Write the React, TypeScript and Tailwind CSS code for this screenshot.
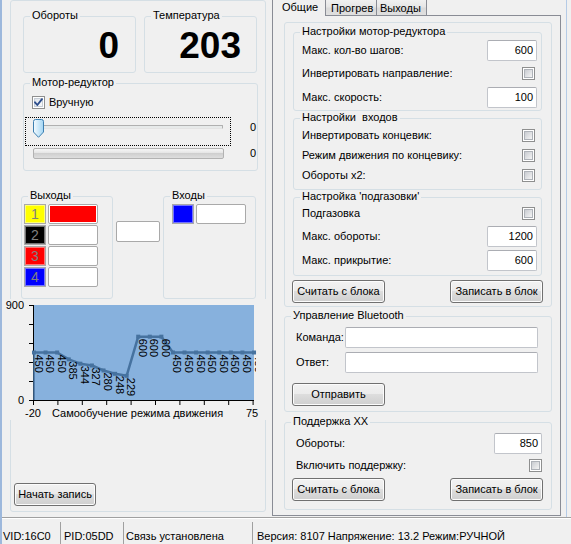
import React from "react";

type Kids = { className?: string; children?: React.ReactNode };

// Windows-style group box: light rounded frame with its caption sitting on the top edge
const Group = ({ title, className = "", children }: Kids & { title?: string }) => (
  <div className={`relative shrink-0 rounded-[3px] border border-[#d5dfe5] ${className}`}>
    {title && (
      <span className="absolute -top-[8px] left-[6px] whitespace-pre bg-[#f0f0f0] px-[2px] leading-[13px]">
        {title}
      </span>
    )}
    {children}
  </div>
);

const Btn = ({ label, className = "" }: { label: string; className?: string }) => (
  <button
    className={`flex shrink-0 items-center justify-center rounded-[3px] border border-[#707070] bg-[linear-gradient(to_bottom,#f2f2f2_0%,#ebebeb_49%,#dddddd_50%,#cfcfcf_100%)] text-[11px] leading-[13px] text-black shadow-[inset_0_0_0_1px_#fcfcfc] ${className}`}
  >
    {label}
  </button>
);

const Field = ({ value = "", className = "" }: { value?: string; className?: string }) => (
  <div
    className={`flex shrink-0 items-center justify-end rounded-[2px] border border-[#c2c5cb] border-t-[#abadb3] bg-white pr-[3px] ${className}`}
  >
    {value}
  </div>
);

const Check = ({ checked = false, className = "" }: { checked?: boolean; className?: string }) => (
  <div className={`relative flex h-[13px] w-[13px] shrink-0 items-center justify-center border border-[#8e8f8f] bg-white ${className}`}>
    <div
      className={`h-[9px] w-[9px] border ${
        checked
          ? "border-[#c6cdd6] bg-[linear-gradient(135deg,#dfe5ec,#f8f9fa)]"
          : "border-[#aeb2b8] bg-[linear-gradient(135deg,#c9ccd1,#f4f4f4)]"
      }`}
    />
    {checked && (
      <svg width="13" height="13" viewBox="0 0 13 13" className="absolute -left-px -top-px">
        <path d="M3 6.3 L5.3 9 L10 3.2" fill="none" stroke="#2d4d8c" strokeWidth="1.9" strokeLinecap="round" strokeLinejoin="round" />
      </svg>
    )}
  </div>
);

// Coloured indicator square used for outputs / inputs
const Swatch = ({ bg, num }: { bg: string; num?: string }) => (
  <div
    className={`flex h-[20px] w-[22px] shrink-0 items-center justify-center border border-[#a9a9a9] text-[14px] leading-none text-[#808080] shadow-[inset_0_0_0_1px_rgba(255,255,255,0.45)] ${bg}`}
  >
    {num}
  </div>
);

const Box = ({ red = false }: { red?: boolean }) => (
  <div className="ml-[2px] h-[20px] w-[50px] shrink-0 rounded-[2px] border border-[#a9a9a9] bg-white p-[1px]">
    {red && <div className="h-full w-full bg-[#ff0000]" />}
  </div>
);

const series = [450, 450, 450, 385, 344, 327, 280, 248, 229, 600, 600, 600, 450, 450, 450, 450, 450, 450, 450, 450];
const sx = (i: number) => 34 + i * 11.58;
const sy = (v: number) => 400 - (v * 95) / 900;

function Chart() {
  const pts = series.map((v, i) => `${sx(i)},${sy(v)}`).join(" ");
  const yTicks = [305, 324, 343, 362, 381, 400];
  const xTicks = Array.from({ length: 10 }, (_, i) => 33.5 + i * 24.4);
  return (
    <svg
      width="266"
      height="121"
      viewBox="2 299 266 121"
      className="-ml-[9px] block shrink-0"
      fontFamily="Liberation Sans, Arial, sans-serif"
      fontSize="11"
    >
      <defs>
        <clipPath id="plotClip">
          <rect x="2" y="299" width="254" height="121" />
        </clipPath>
      </defs>
      <rect x="2" y="299" width="266" height="121" fill="#f0f0f0" />
      <rect x="33" y="305" width="221" height="95" fill="#87b1dd" />
      <line x1="33.5" y1="305" x2="33.5" y2="401" stroke="#000" />
      <line x1="33" y1="400.5" x2="254" y2="400.5" stroke="#000" />
      {yTicks.map((t) => (
        <line key={t} x1="29" y1={t + 0.5} x2="33" y2={t + 0.5} stroke="#000" />
      ))}
      {xTicks.map((t) => (
        <line key={t} x1={t} y1="400" x2={t} y2="405" stroke="#000" />
      ))}
      <text x="24" y="309" textAnchor="end">900</text>
      <text x="24" y="404" textAnchor="end">0</text>
      <text x="25" y="417">-20</text>
      <text x="52" y="417">Самообучение режима движения</text>
      <text x="246" y="417">75</text>

      <line x1="34" y1="400" x2="34" y2={sy(450)} stroke="#46729f" strokeWidth="1.5" />
      <polyline points={pts} fill="none" stroke="#46729f" strokeWidth="2.5" strokeLinejoin="round" />
      {series.map((v, i) => (
        <rect key={`m${i}`} x={sx(i) - 2} y={sy(v) - 2} width="4" height="4" fill="#46729f" />
      ))}
      <g clipPath="url(#plotClip)">
        {series.map((v, i) => (
          <text key={`t${i}`} transform={`translate(${sx(i) + 0.5},${sy(v) + 2}) rotate(90)`}>
            {v}
          </text>
        ))}
      </g>
    </svg>
  );
}

const Row = ({ className = "", children }: Kids) => (
  <div className={`flex items-center justify-between ${className}`}>{children}</div>
);

export default function App() {
  return (
    <div className="flex h-[544px] w-[571px] flex-col overflow-hidden border-l-2 border-[#9db8dc] bg-[#f0f0f0] font-['Liberation_Sans',Arial,sans-serif] text-[11px] leading-[13px] text-black">
      <div className="flex h-[517px] shrink-0">
        {/* left panel: readouts, motor control, IO and learning chart */}
        <div className="ml-[8px] flex h-[512px] w-[256px] shrink-0 flex-col rounded-[3px] border border-[#d5dfe5]">
          <div className="ml-[12px] mt-[15px] flex gap-[8px]">
            <Group title="Обороты" className="flex h-[57px] w-[113px] justify-end pr-[16px] pt-[10px]">
              <span className="text-[37px] font-bold leading-none">0</span>
            </Group>
            <Group title="Температура" className="flex h-[57px] w-[113px] justify-end pr-[15px] pt-[10px]">
              <span className="text-[37px] font-bold leading-none">203</span>
            </Group>
          </div>

          <Group title="Мотор-редуктор" className="ml-[12px] mt-[10px] flex h-[88px] w-[235px] flex-col">
            <div className="ml-[8px] mt-[12px] flex items-center">
              <Check checked />
              <span className="ml-[4px]">Вручную</span>
            </div>
            <div className="ml-[1px] mt-[8px] flex">
              <div className="relative h-[29px] w-[206px] shrink-0 border border-dotted border-black">
                <div className="ml-[11px] mt-[7px] h-[4px] w-[186px] rounded-[1px] border border-[#b0b0b0] border-b-[#e4e4e4] bg-[#e7eaea]" />
                <svg width="11" height="19" viewBox="0 0 11 19" className="absolute left-[7px] top-[1px]">
                  <defs>
                    <linearGradient id="thumbFill" x1="0" y1="0" x2="1" y2="0">
                      <stop offset="0" stopColor="#f4fbff" />
                      <stop offset="1" stopColor="#a3d5f3" />
                    </linearGradient>
                  </defs>
                  <path
                    d="M0.5 2.5 Q0.5 0.5 2.5 0.5 H8.5 Q10.5 0.5 10.5 2.5 V13 L5.5 18.3 L0.5 13 Z"
                    fill="url(#thumbFill)"
                    stroke="#3c7fb1"
                  />
                </svg>
              </div>
              <span className="ml-[19px] mt-[4px]">0</span>
            </div>
            <div className="mt-[1px] flex items-center">
              <div className="ml-[9px] h-[11px] w-[191px] shrink-0 rounded-[2px] border border-[#b2b2b2] bg-[linear-gradient(to_bottom,#f6f6f6,#e2e2e2_50%,#cfcfcf_50%,#dedede)]" />
              <span className="ml-[26px]">0</span>
            </div>
          </Group>

          <div className="ml-[10px] mt-[25px] flex items-start">
            <Group title="Выходы" className="flex h-[103px] w-[92px] flex-col gap-[1px] pl-[2px] pt-[7px]">
              <div className="flex">
                <Swatch bg="bg-[#ffff00]" num="1" />
                <Box red />
              </div>
              <div className="flex">
                <Swatch bg="bg-black" num="2" />
                <Box />
              </div>
              <div className="flex">
                <Swatch bg="bg-[#ff0000]" num="3" />
                <Box />
              </div>
              <div className="flex">
                <Swatch bg="bg-[#0000ff]" num="4" />
                <Box />
              </div>
            </Group>
            <div className="ml-[3px] mt-[25px] h-[21px] w-[44px] shrink-0 rounded-[2px] border border-[#a9a9a9] bg-white" />
            <Group title="Входы" className="ml-[3px] flex h-[103px] w-[93px] items-start pl-[8px] pt-[7px]">
              <Swatch bg="bg-[#0000ff]" />
              <Box />
            </Group>
          </div>

          <Chart />

          <Btn label="Начать запись" className="ml-[3px] mt-[63px] h-[23px] w-[82px]" />
        </div>

        {/* settings tab control */}
        <div className="ml-[6px] flex h-[516px] w-[289px] shrink-0 flex-col">
          <div className="flex h-[15px] shrink-0 items-start">
            <div className="relative z-10 h-[16px] w-[54px] shrink-0 border-x border-[#898c95] bg-[#f0f0f0] pl-[9px] pt-[1px]">
              Общие
            </div>
            <div className="h-[15px] w-[51px] shrink-0 border-r border-[#898c95] bg-[linear-gradient(to_bottom,#f0f0f0,#e6e6e6_45%,#dadada_55%,#dfdfdf)] pl-[5px] pt-[2px]">
              Прогрев
            </div>
            <div className="h-[15px] w-[50px] shrink-0 border-r border-[#898c95] bg-[linear-gradient(to_bottom,#f0f0f0,#e6e6e6_45%,#dadada_55%,#dfdfdf)] pl-[3px] pt-[2px]">
              Выходы
            </div>
          </div>

          <div className="flex h-[501px] shrink-0 flex-col border border-[#898c95] bg-[#f0f0f0]">
            <Group className="ml-[11px] mt-[6px] flex h-[285px] w-[268px] flex-col">
              <Group title="Настройки мотор-редуктора" className="ml-[8px] mt-[9px] flex h-[79px] w-[249px] flex-col pl-[8px] pr-[4px]">
                <Row className="mt-[6px] h-[22px]">
                  <span>Макс. кол-во шагов:</span>
                  <Field value="600" className="h-[21px] w-[50px]" />
                </Row>
                <Row className="h-[24px]">
                  <span>Инвертировать направление:</span>
                  <Check className="mr-[2px]" />
                </Row>
                <Row className="h-[24px]">
                  <span>Макс. скорость:</span>
                  <Field value="100" className="h-[21px] w-[50px]" />
                </Row>
              </Group>

              <Group title="Настройки  входов" className="ml-[8px] mt-[7px] flex h-[72px] w-[249px] flex-col pl-[8px] pr-[4px]">
                <Row className="mt-[6px] h-[20px]">
                  <span>Инвертировать концевик:</span>
                  <Check className="mr-[2px]" />
                </Row>
                <Row className="h-[20px]">
                  <span>Режим движения по концевику:</span>
                  <Check className="mr-[2px]" />
                </Row>
                <Row className="h-[20px]">
                  <span>Обороты x2:</span>
                  <Check className="mr-[2px]" />
                </Row>
              </Group>

              <Group title="Настройка 'подгазовки'" className="ml-[8px] mt-[7px] flex h-[79px] w-[249px] flex-col pl-[8px] pr-[4px]">
                <Row className="mt-[5px] h-[20px]">
                  <span>Подгазовка</span>
                  <Check className="mr-[2px]" />
                </Row>
                <Row className="h-[26px]">
                  <span>Макс. обороты:</span>
                  <Field value="1200" className="h-[21px] w-[50px]" />
                </Row>
                <Row className="h-[22px]">
                  <span>Макс. прикрытие:</span>
                  <Field value="600" className="h-[21px] w-[50px]" />
                </Row>
              </Group>

              <div className="mt-[4px] flex justify-between pl-[7px] pr-[8px]">
                <Btn label="Считать с блока" className="h-[23px] w-[93px]" />
                <Btn label="Записать в блок" className="h-[23px] w-[93px]" />
              </div>
            </Group>

            <Group title="Управление Bluetooth" className="ml-[11px] mt-[9px] flex h-[96px] w-[268px] flex-col">
              <div className="mt-[9px] flex h-[22px] items-center pl-[11px]">
                <span className="w-[49px] shrink-0">Команда:</span>
                <Field className="h-[21px] w-[193px]" />
              </div>
              <div className="mt-[3px] flex h-[22px] items-center pl-[11px]">
                <span className="w-[49px] shrink-0">Ответ:</span>
                <Field className="h-[21px] w-[193px]" />
              </div>
              <Btn label="Отправить" className="ml-[7px] mt-[10px] h-[23px] w-[93px]" />
            </Group>

            <Group title="Поддержка ХХ" className="ml-[11px] mt-[10px] flex h-[88px] w-[268px] flex-col">
              <Row className="mt-[9px] h-[22px] pl-[11px] pr-[9px]">
                <span>Обороты:</span>
                <Field value="850" className="h-[21px] w-[48px]" />
              </Row>
              <Row className="h-[22px] pl-[11px] pr-[9px]">
                <span>Включить поддержку:</span>
                <Check />
              </Row>
              <div className="mt-[2px] flex justify-between pl-[7px] pr-[8px]">
                <Btn label="Считать с блока" className="h-[23px] w-[93px]" />
                <Btn label="Записать в блок" className="h-[23px] w-[93px]" />
              </div>
            </Group>
          </div>
        </div>

        <div className="ml-[5px] h-full w-px shrink-0 bg-[#b5cbe6]" />
      </div>

      {/* status bar */}
      <div className="flex h-[27px] shrink-0 border-t border-[#a0a0a0] shadow-[inset_0_1px_0_#ffffff]">
        <span className="w-[58px] shrink-0 pl-[1px] pt-[12px]">VID:16C0</span>
        <div className="mt-[4px] w-px shrink-0 bg-[#a0a0a0]" />
        <span className="w-[62px] shrink-0 pl-[3px] pt-[12px]">PID:05DD</span>
        <div className="mt-[4px] w-px shrink-0 bg-[#a0a0a0]" />
        <span className="w-[128px] shrink-0 pl-[2px] pt-[12px]">Связь установлена</span>
        <div className="mt-[4px] w-px shrink-0 bg-[#a0a0a0]" />
        <span className="whitespace-nowrap pl-[4px] pt-[12px]">Версия: 8107 Напряжение: 13.2 Режим:РУЧНОЙ</span>
      </div>
    </div>
  );
}
